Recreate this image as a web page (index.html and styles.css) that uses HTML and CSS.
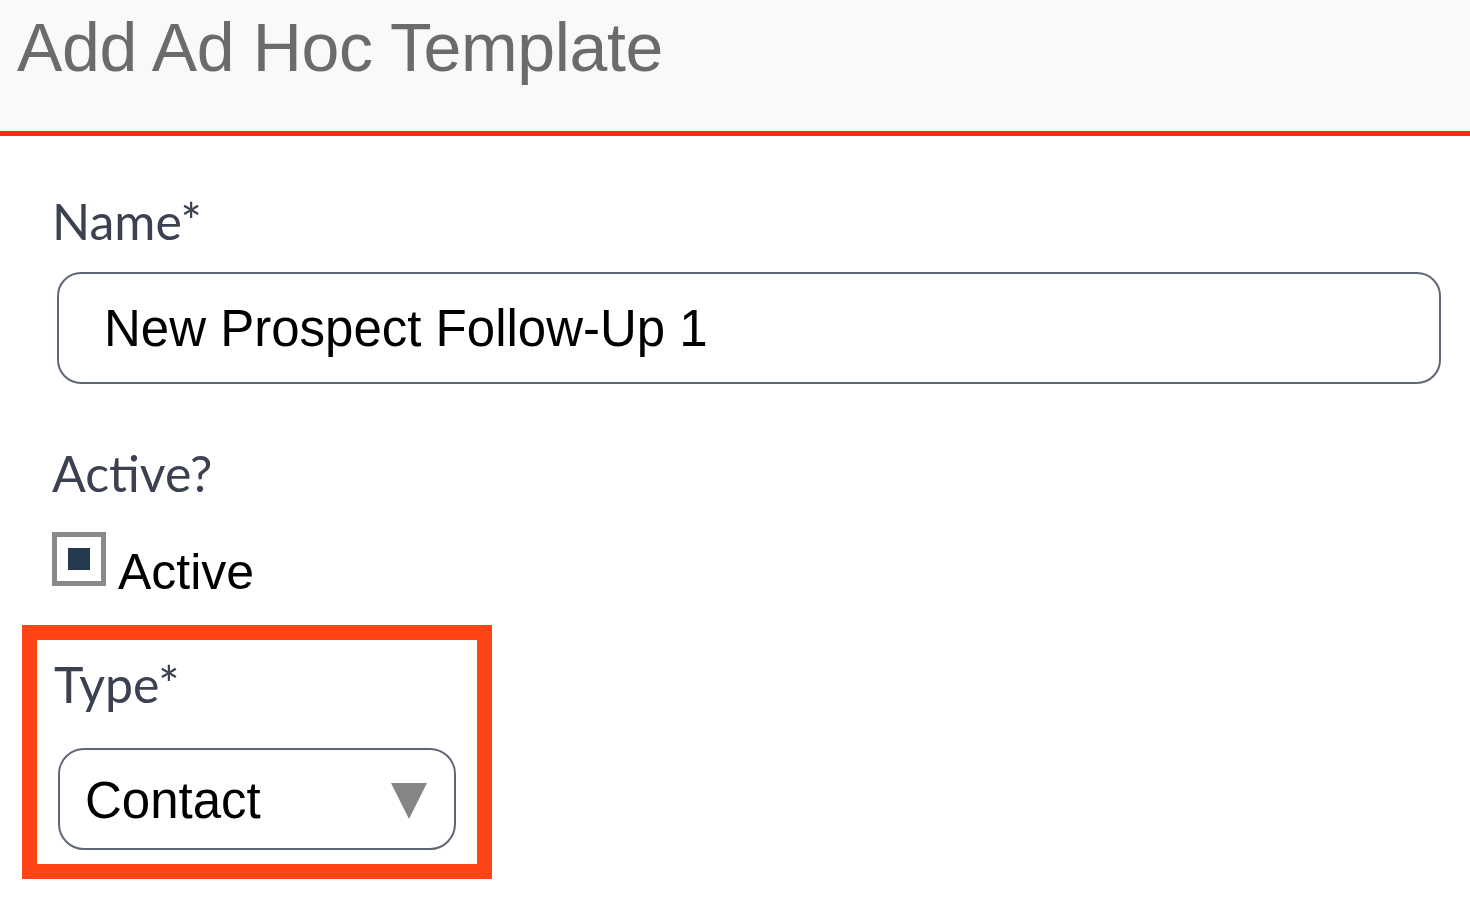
FILE: index.html
```html
<!DOCTYPE html>
<html>
<head>
<meta charset="utf-8">
<title>Add Ad Hoc Template</title>
<link rel="stylesheet" href="styles.css">
</head>
<body>
<header class="header">
  <h1 class="title">Add Ad Hoc Template</h1>
</header>
<main class="form">
  <label class="label label-name">Name*</label>
  <div class="input">New Prospect Follow-Up 1</div>
  <label class="label label-active">Active?</label>
  <div class="check-row">
    <span class="checkbox"><span class="check-mark"></span></span>
    <span class="check-text">Active</span>
  </div>
  <section class="highlight">
    <label class="label label-type">Type*</label>
    <div class="select">
      <span class="select-text">Contact</span>
      <svg class="caret" width="38" height="38" viewBox="0 0 38 38"><polygon points="1,1 37,1 19,37" fill="#858585"/></svg>
    </div>
  </section>
</main>
</body>
</html>
```
FILE: styles.css
```css
html, body {
  margin: 0;
  padding: 0;
  background: #ffffff;
}
body {
  width: 1470px;
  height: 898px;
  overflow: hidden;
}
.header {
  height: 131px;
  background: #f9f9f9;
  border-bottom: 5px solid #ff2a14;
  box-sizing: content-box;
  padding-left: 17px;
}
.title {
  margin: 0;
  padding-top: 7px;
  font-family: "Liberation Sans", Arial, sans-serif;
  font-weight: normal;
  font-size: 68px;
  line-height: 80px;
  letter-spacing: -0.35px;
  color: #6d6a6a;
}
.form {
  display: flex;
  flex-direction: column;
  align-items: flex-start;
  padding-left: 52px;
}
.label {
  display: block;
  font-family: Lato, "Open Sans", sans-serif;
  font-size: 50px;
  line-height: 60px;
  color: #3b4150;
}
.label-name {
  margin-top: 55px;
}
.input {
  margin-top: 21px;
  margin-left: 5px;
  width: 1384px;
  height: 112px;
  box-sizing: border-box;
  border: 2px solid #5f6675;
  border-radius: 24px;
  padding-left: 45px;
  padding-top: 1px;
  font-family: "Liberation Sans", Arial, sans-serif;
  font-size: 51px;
  line-height: 107px;
  color: #000;
}
.label-active {
  margin-top: 59px;
}
.check-row {
  display: flex;
  align-items: flex-start;
  margin-top: 29px;
}
.checkbox {
  width: 54px;
  height: 54px;
  box-sizing: border-box;
  border: 5px solid #8a8a8a;
  background: #fff;
  display: flex;
  align-items: center;
  justify-content: center;
}
.check-mark {
  width: 22px;
  height: 22px;
  background: #253a50;
}
.check-text {
  margin-left: 12px;
  margin-top: 10px;
  font-family: "Liberation Sans", Arial, sans-serif;
  font-size: 50px;
  line-height: 60px;
  color: #000;
}
.highlight {
  margin-top: 23px;
  margin-left: -30px;
  width: 470px;
  box-sizing: border-box;
  border: 15px solid #ff4416;
  padding: 14px 22px 14px 17px;
  display: flex;
  flex-direction: column;
  align-items: flex-start;
}
.select {
  margin-top: 34px;
  margin-left: 4px;
  width: 398px;
  height: 102px;
  box-sizing: border-box;
  border: 2px solid #5f6675;
  border-radius: 26px;
  display: flex;
  align-items: center;
  padding-left: 25px;
  padding-right: 26px;
}
.select-text {
  font-family: "Liberation Sans", Arial, sans-serif;
  font-size: 51px;
  line-height: 60px;
  padding-top: 4px;
  color: #000;
}
.caret {
  margin-left: auto;
  margin-top: 4px;
  display: block;
}
```
